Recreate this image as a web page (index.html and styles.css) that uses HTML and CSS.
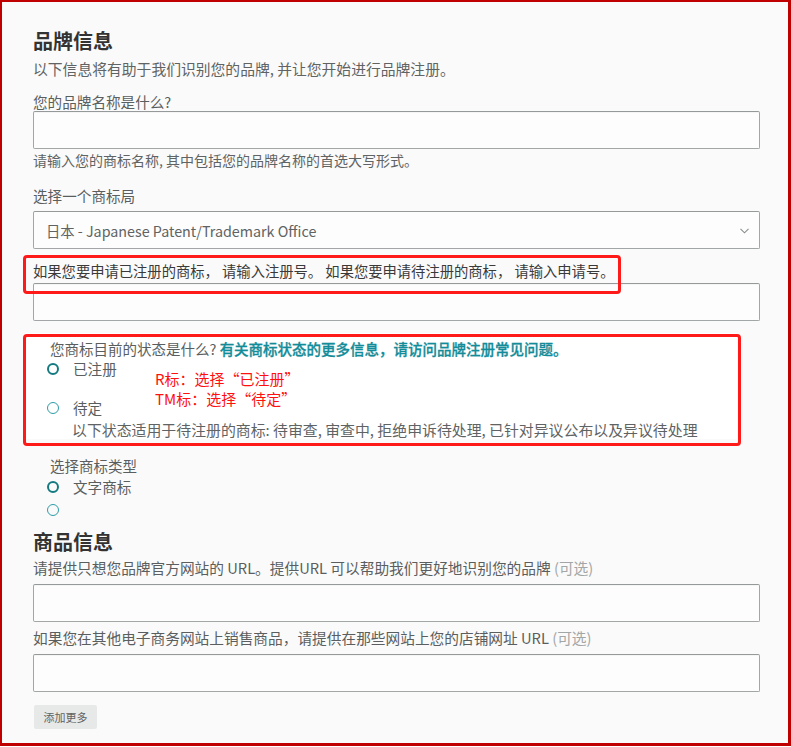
FILE: index.html
```html
<!DOCTYPE html>
<html lang="zh-CN">
<head>
<meta charset="utf-8">
<title>品牌信息</title>
<link rel="stylesheet" href="styles.css">
</head>
<body>
<div class="frame">
  <h1 class="title">品牌信息</h1>
  <p class="subtitle">以下信息将有助于我们识别您的品牌, 并让您开始进行品牌注册。</p>
  <div class="label label-tight">您的品牌名称是什么?</div>
  <div class="input"></div>
  <p class="helper">请输入您的商标名称, 其中包括您的品牌名称的首选大写形式。</p>
  <div class="label label-office">选择一个商标局</div>
  <div class="select">
    <span>日本 - Japanese Patent/Trademark Office</span>
    <svg class="chev" width="9" height="6" viewBox="0 0 9 6"><path d="M0.5 0.8 L4.5 4.8 L8.5 0.8" fill="none" stroke="#8a8d8d" stroke-width="1.1"/></svg>
  </div>
  <p class="note">如果您要申请已注册的商标， 请输入注册号。 如果您要申请待注册的商标， 请输入申请号。</p>
  <div class="input input-num"></div>

  <div class="status">
    <p class="question">您商标目前的状态是什么? <span class="link">有关商标状态的更多信息，请访问品牌注册常见问题。</span></p>
    <div class="radio radio-first"><span class="dot dot-sel"></span><span class="rlabel">已注册</span></div>
    <div class="radio radio-pending"><span class="dot"></span><span class="rlabel">待定</span></div>
    <p class="sub">以下状态适用于待注册的商标: 待审查, 审查中, 拒绝申诉待处理, 已针对异议公布以及异议待处理</p>
  </div>

  <div class="types">
    <p class="question">选择商标类型</p>
    <div class="radio radio-first"><span class="dot dot-sel"></span><span class="rlabel">文字商标</span></div>
    <div class="radio radio-empty"><span class="dot"></span></div>
  </div>

  <h2 class="title title-goods">商品信息</h2>
  <p class="label label-url">请提供只想您品牌官方网站的 URL。提供URL 可以帮助我们更好地识别您的品牌 <span class="opt">(可选)</span></p>
  <div class="input input-gap"></div>
  <p class="label label-url">如果您在其他电子商务网站上销售商品，请提供在那些网站上您的店铺网址 URL <span class="opt">(可选)</span></p>
  <div class="input input-gap"></div>
  <div class="btn">添加更多</div>

  <div class="annot annot-1"></div>
  <div class="annot annot-2"></div>
  <div class="annot-text">R标：选择“已注册”<br>TM标：选择“待定”</div>
</div>
</body>
</html>
```

FILE: styles.css
```css
* { box-sizing: border-box; }
html, body { margin: 0; padding: 0; background: #ffffff; }
body {
  font-family: "Noto Sans CJK SC", "Noto Sans", sans-serif;
  color: #555;
}
.frame {
  position: relative;
  width: 791px;
  height: 746px;
  border: 2px solid #c00000;
  border-right-width: 3px;
  border-bottom-width: 3px;
  background: #fafafa;
  padding: 25px 28px 0 31px;
  display: flex;
  flex-direction: column;
}
.title {
  margin: 0;
  font-size: 20px;
  line-height: 28px;
  font-weight: 700;
  color: #333;
}
.subtitle {
  margin: 4px 0 0;
  font-size: 14.8px;
  line-height: 20px;
  color: #5f6363;
}
.label {
  margin: 0;
  font-size: 14.6px;
  line-height: 20px;
  color: #5a5e5e;
}
.label-tight { margin-top: 14px; line-height: 18px; }
.label-office { margin-top: 17px; line-height: 18px; }
.input {
  height: 38px;
  border: 1px solid #a2a6a6;
  border-top-color: #959999;
  border-radius: 2px;
  background: #fdfdfd;
  box-shadow: inset 0 1px 0 rgba(0,0,0,0.03);
}
.helper {
  margin: 1px 0 0;
  font-size: 14px;
  line-height: 20px;
  color: #5f6363;
}
.select {
  margin-top: 6px;
  height: 38px;
  border: 1px solid #a2a6a6;
  border-top-color: #959999;
  border-radius: 2px;
  background: #fdfdfd;
  display: flex;
  align-items: center;
  justify-content: space-between;
  padding: 0 10px 0 12px;
  font-size: 14.3px;
  color: #5f6363;
}
.chev { margin-top: 2px; }
.note {
  margin: 12px 0 0;
  font-size: 14.3px;
  line-height: 20px;
  color: #3a3a3a;
}
.input-num { margin-top: 2px; }
.status {
  margin: 12px 0 0 -8px;
  width: 712px;
  background: #ffffff;
  padding: 6px 0 0 25px;
}
.question {
  margin: 0;
  font-size: 14.5px;
  line-height: 20px;
  color: #5a5e5e;
}
.link {
  color: #128c98;
  font-weight: 500;
  -webkit-text-stroke: 0.3px #128c98;
}
.radio {
  display: flex;
  align-items: center;
  height: 20px;
  line-height: 20px;
  margin-left: -3px;
  font-size: 14.6px;
  color: #5a5e5e;
}
.radio-first { margin-top: 0; margin-bottom: 1px; }
.radio-pending { margin-top: 19px; }
.radio-empty { margin-top: 3px; }
.dot {
  width: 12px;
  height: 12px;
  border-radius: 50%;
  border: 1.3px solid #2b9ea7;
  flex: none;
}
.dot-sel {
  border: 2.7px solid #137a80;
}
.rlabel { margin-left: 14px; }
.sub {
  margin: 3px 0 0 22px;
  font-size: 14.9px;
  line-height: 18px;
  color: #5f6363;
}
.types {
  margin: 17px 0 0 17px;
}
.types .radio-first { margin-top: 1px; margin-bottom: 0; }
.title-goods { margin-top: 8px; }
.label-url { margin-top: 2px; font-size: 14.7px; }
.label-url + .input { margin-top: 6px; }
.input-gap + .label-url { margin-top: 6px; }
.opt { color: #a3a6a6; }
.btn {
  margin-top: 13px;
  align-self: flex-start;
  margin-left: 1px;
  width: 63px;
  height: 24px;
  background: #e7e8e8;
  border-radius: 2px;
  font-size: 11px;
  line-height: 24px;
  text-align: center;
  color: #5f6363;
}
.annot {
  position: absolute;
  border: 3px solid #ff1a1a;
  border-radius: 4px;
  pointer-events: none;
}
.annot-1 { left: 21px; top: 253px; width: 598px; height: 39px; }
.annot-2 { left: 21px; top: 332px; width: 718px; height: 112px; }
.annot-text {
  position: absolute;
  left: 153px;
  top: 367px;
  font-size: 15px;
  line-height: 20px;
  color: #ff1010;
}
```
